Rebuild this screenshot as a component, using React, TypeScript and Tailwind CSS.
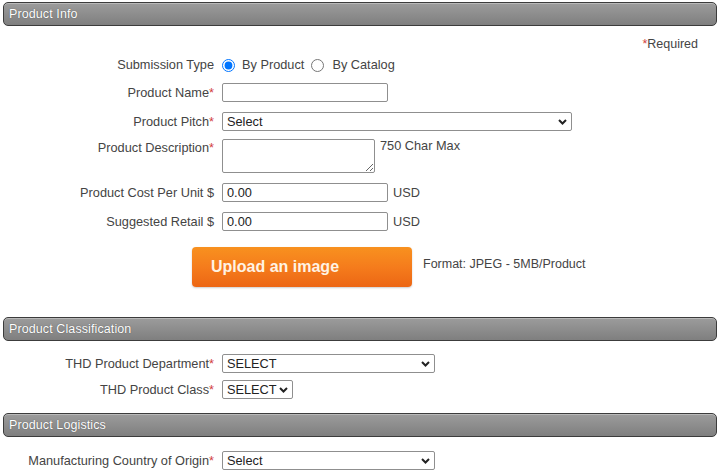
import React from "react";

const Star = () => <span className="text-[#d2403a]">*</span>;

function Header({ title }: { title: string }) {
  return (
    <div className="mx-[3px] h-[24px] rounded-[5px] border border-[#3c3c3c] bg-gradient-to-b from-[#9c9c9c] to-[#7f7f7f] px-[5px] flex items-center shadow-[inset_0_1px_0_rgba(255,255,255,0.3)]">
      <span className="text-[12.5px] text-white [text-shadow:0_0_1px_rgba(0,0,0,0.5)] tracking-[0.1px]">{title}</span>
    </div>
  );
}

function Label({ children, top = false }: { children: React.ReactNode; top?: boolean }) {
  return (
    <div className={`w-[214px] shrink-0 text-right text-[12.75px] leading-[16px] text-[#444] ${top ? "pt-[1px]" : ""}`}>{children}</div>
  );
}

function Chevron() {
  return (
    <svg className="pointer-events-none absolute right-[5px] top-1/2 -translate-y-1/2" width="9" height="6" viewBox="0 0 9 6">
      <path d="M1 1 L4.5 4.5 L8 1" fill="none" stroke="#222" strokeWidth="2" />
    </svg>
  );
}

function Select({ w, value }: { w: string; value: string }) {
  return (
    <div className={`relative ${w} h-[19px]`}>
      <select
        defaultValue={value}
        className="block appearance-none w-full h-full border border-[#8f8f8f] rounded-[2px] bg-white pl-[4px] pr-[14px] py-0 text-[12.75px] leading-[17px] text-[#222] outline-none"
      >
        <option>{value}</option>
      </select>
      <Chevron />
    </div>
  );
}

const inputCls = "block ml-[8px] w-[166px] h-[19px] border border-[#8f8f8f] rounded-[2px] px-[4px] text-[12.75px] text-[#222]";

export default function App() {
  return (
    <div className="w-[720px] h-[476px] overflow-hidden bg-white font-['Liberation_Sans',Arial,sans-serif] pt-[2px]">
      <Header title="Product Info" />
      <div className="mt-[11px] pr-[22px] text-right text-[12.5px] leading-[14px] text-[#444]">
        <Star />Required
      </div>

      <div className="mt-[6px] flex items-center h-[16px]">
        <Label>Submission Type</Label>
        <div className="ml-[8px] flex items-center text-[12.75px] text-[#444]">
          <input type="radio" name="st" defaultChecked className="m-0 w-[13px] h-[13px] accent-[#0075ff]" />
          <span className="ml-[7px]">By Product</span>
          <input type="radio" name="st" className="ml-[7px] m-0 w-[13px] h-[13px] accent-[#0075ff]" />
          <span className="ml-[8px]">By Catalog</span>
        </div>
      </div>

      <div className="mt-[10px] flex items-center">
        <Label>Product Name<Star /></Label>
        <input type="text" className={inputCls} />
      </div>

      <div className="mt-[10px] flex items-center">
        <Label>Product Pitch<Star /></Label>
        <div className="ml-[8px]"><Select w="w-[350px]" value="Select" /></div>
      </div>

      <div className="mt-[8px] flex items-start">
        <Label top>Product Description<Star /></Label>
        <textarea className="ml-[8px] w-[153px] h-[34px] border border-[#8f8f8f] rounded-[2px] text-[13px] block" />
        <span className="ml-[5px] -mt-[3px] text-[12.75px] text-[#444]">750 Char Max</span>
      </div>

      <div className="mt-[10px] flex items-center">
        <Label>Product Cost Per Unit $</Label>
        <input type="text" defaultValue="0.00" className={inputCls} />
        <span className="ml-[5px] text-[12.75px] text-[#444]">USD</span>
      </div>

      <div className="mt-[10px] flex items-center">
        <Label>Suggested Retail $</Label>
        <input type="text" defaultValue="0.00" className={inputCls} />
        <span className="ml-[5px] text-[12.75px] text-[#444]">USD</span>
      </div>

      <div className="mt-[16px] flex items-center pl-[192px]">
        <button className="w-[220px] h-[40px] rounded-[4px] bg-gradient-to-b from-[#f8911f] via-[#f57c1c] to-[#ec6614] text-left pl-[19px] text-[16px] font-bold text-[#fff3e3] shadow-[0_1px_2px_rgba(0,0,0,0.2)]">
          Upload an image
        </button>
        <span className="ml-[11px] -mt-[6px] text-[12.5px] text-[#444]">Format: JPEG - 5MB/Product</span>
      </div>

      <div className="mt-[30px]">
        <Header title="Product Classification" />
      </div>

      <div className="mt-[13px] flex items-center">
        <Label>THD Product Department<Star /></Label>
        <div className="ml-[8px]"><Select w="w-[213px]" value="SELECT" /></div>
      </div>

      <div className="mt-[7px] flex items-center">
        <Label>THD Product Class<Star /></Label>
        <div className="ml-[8px]"><Select w="w-[71px]" value="SELECT" /></div>
      </div>

      <div className="mt-[14px]">
        <Header title="Product Logistics" />
      </div>

      <div className="mt-[14px] flex items-center">
        <Label>Manufacturing Country of Origin<Star /></Label>
        <div className="ml-[8px]"><Select w="w-[213px]" value="Select" /></div>
      </div>
    </div>
  );
}
